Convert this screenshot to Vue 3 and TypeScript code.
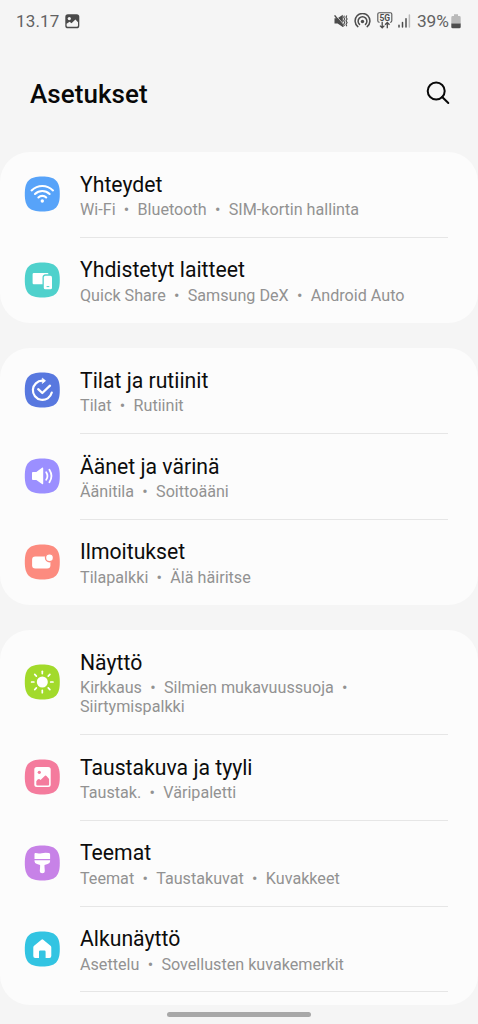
<script setup lang="ts">
interface Item {
  icon: string
  color: string
  title: string
  parts: string[]
}

const groups: Item[][] = [
  [
    { icon: 'wifi', color: '#57a3f9', title: 'Yhteydet', parts: ['Wi-Fi', 'Bluetooth', 'SIM-kortin hallinta'] },
    { icon: 'devices', color: '#4fd1cc', title: 'Yhdistetyt laitteet', parts: ['Quick Share', 'Samsung DeX', 'Android Auto'] },
  ],
  [
    { icon: 'modes', color: '#5878df', title: 'Tilat ja rutiinit', parts: ['Tilat', 'Rutiinit'] },
    { icon: 'sound', color: '#9b8fff', title: 'Äänet ja värinä', parts: ['Äänitila', 'Soittoääni'] },
    { icon: 'notify', color: '#fc8b7f', title: 'Ilmoitukset', parts: ['Tilapalkki', 'Älä häiritse'] },
  ],
  [
    { icon: 'display', color: '#a2da2b', title: 'Näyttö', parts: ['Kirkkaus', 'Silmien mukavuussuoja', 'Siirtymispalkki'] },
    { icon: 'wallpaper', color: '#f47b9d', title: 'Taustakuva ja tyyli', parts: ['Taustak.', 'Väripaletti'] },
    { icon: 'themes', color: '#c782e7', title: 'Teemat', parts: ['Teemat', 'Taustakuvat', 'Kuvakkeet'] },
    { icon: 'home', color: '#32c4e2', title: 'Alkunäyttö', parts: ['Asettelu', 'Sovellusten kuvakemerkit'] },
  ],
]

const rays = [0, 45, 90, 135, 180, 225, 270, 315]
</script>

<template>
  <div class="screen">
    <div class="status">
      <span class="clock">13.17</span>
      <svg class="s-image" width="15" height="15" viewBox="0 0 15 15">
        <rect x="0.3" y="0.3" width="14" height="14" rx="2.6" fill="#4a4a4a" />
        <circle cx="4.3" cy="4.6" r="1.6" fill="#f5f5f5" />
        <path d="M1.6 9.8 4.6 7.8 6.5 9.3 10.4 5.6 13 8.3V11.4Q13 12.7 11.7 12.7H2.9Q1.6 12.7 1.6 11.4Z" fill="#f5f5f5" />
      </svg>
      <span class="spacer"></span>
      <svg class="s-mute" width="14" height="14" viewBox="0 0 14 14">
        <path d="M0.5 4.2H3.6L8.8 0.8V13L3.6 9.6H0.5Z" fill="#4c4c4c" />
        <path d="M1.6 1.2 9.6 10.2" stroke="#f5f5f5" stroke-width="0.7" />
        <path d="M0.6 1.4 9.4 12.6" stroke="#4c4c4c" stroke-width="1.5" />
        <path d="M10.4 1.6 9.7 3.3 10.7 5 9.7 6.8 10.7 8.6 9.7 10.4 10.4 12M12.8 1.6 12 3.3 13.1 5 12 6.8 13.1 8.6 12 10.4 12.8 12.2" fill="none" stroke="#4c4c4c" stroke-width="1.1" />
      </svg>
      <svg class="s-hotspot" width="17" height="16" viewBox="0 0 17 16">
        <g fill="none" stroke="#4c4c4c" stroke-width="1.5" stroke-linecap="round">
          <path d="M3.8 13.6A7.4 7.4 0 1 1 13.2 13.6" />
          <path d="M5.5 11.4A4.4 4.4 0 1 1 11.5 11.4" />
        </g>
        <circle cx="8.5" cy="8.5" r="1.7" fill="#4c4c4c" />
      </svg>
      <svg class="s-5g" width="16" height="18" viewBox="0 0 16 18">
        <path d="M2.6 10.2H2.2Q0.8 10.2 0.8 8.8V2.1Q0.8 0.7 2.2 0.7H13.4Q14.8 0.7 14.8 2.1V8.8Q14.8 10.2 13.4 10.2H13" fill="none" stroke="#555" stroke-width="1.1" />
        <text x="7.8" y="8.6" text-anchor="middle" class="g5">5G</text>
        <path d="M5.2 9.8V15.8M3 13.6 5.2 15.9 7.4 13.6M10.3 16.3V10.5M8.1 12.7 10.3 10.4 12.5 12.7" fill="none" stroke="#4c4c4c" stroke-width="1.3" />
      </svg>
      <svg class="s-signal" width="13" height="14" viewBox="0 0 13 14">
        <path d="M1 11.2V13M4.5 8.4V13M8 4.8V13" stroke="#4c4c4c" stroke-width="1.5" stroke-linecap="round" />
        <path d="M11.4 1V13" stroke="#b9b9b9" stroke-width="1.5" stroke-linecap="round" />
      </svg>
      <span class="percent">39%</span>
      <svg class="s-battery" width="10" height="15" viewBox="0 0 10 15">
        <path d="M3 0.3H7V2H8.3Q9.7 2 9.7 3.4V9.8H0.3V3.4Q0.3 2 1.7 2H3Z" fill="#b9b9b9" />
        <path d="M0.3 9.6H9.7V12.9Q9.7 14.3 8.3 14.3H1.7Q0.3 14.3 0.3 12.9Z" fill="#4c4c4c" />
      </svg>
    </div>

    <header class="header">
      <h1>Asetukset</h1>
      <svg width="24" height="24" viewBox="0 0 24 24" fill="none" stroke="#080808" stroke-width="2">
        <circle cx="10.2" cy="10" r="8.5" />
        <path d="M16.2 16 22.3 22" stroke-linecap="round" />
      </svg>
    </header>

    <main class="groups">
      <section v-for="(group, g) in groups" :key="g" class="card">
        <div v-for="item in group" :key="item.title" class="row">
          <svg class="icon" width="36" height="36" viewBox="-0.3 0 36 36">
            <path d="M18 .5C31 .5 35.5 5 35.5 18S31 35.5 18 35.5.5 31 .5 18 5 .5 18 .5Z" :fill="item.color" />
            <g v-if="item.icon === 'wifi'" fill="none" stroke="#fff" stroke-width="2.1" stroke-linecap="round">
              <path d="M7.3 14.4Q12 10 18 10T28.7 14.4" />
              <path d="M10.7 18Q13.8 15 18 15T25.3 18" />
              <path d="M14.1 21.5Q15.6 19.9 18 19.9T21.9 21.5" />
              <circle cx="18" cy="25" r="1.7" fill="#fff" stroke="none" />
            </g>
            <g v-else-if="item.icon === 'devices'" fill="#fff">
              <path d="M9.5 11H23Q24.2 11 24.2 12.2H21.4Q18.2 12.4 18.2 15.4V22.3H9.5Q8.3 22.3 8.3 21.1V12.2Q8.3 11 9.5 11Z" />
              <rect x="19.5" y="13.8" width="8.2" height="13.5" rx="1.6" />
              <path d="M22.3 24.6H25" stroke="#4fd1cc" stroke-width="1" />
            </g>
            <g v-else-if="item.icon === 'modes'" fill="none" stroke="#fff" stroke-width="2.2" stroke-linecap="round" stroke-linejoin="round">
              <path d="M19 8.7H18A9.6 9.6 0 1 0 27.5 20.6" />
              <path d="M18.3 6.4 21.2 8.8 18.3 11.2Z" fill="#fff" stroke-width=".8" />
              <path d="M13.9 17.2 18 21 25.7 13.7" stroke-width="2.3" />
            </g>
            <g v-else-if="item.icon === 'sound'">
              <path d="M7.7 14.8Q7.7 13.9 8.6 13.9H12L17.7 9.8Q18.9 9.2 18.9 10.4V25.5Q18.9 26.7 17.7 26.1L12 22H8.6Q7.7 22 7.7 21.1Z" fill="#fff" />
              <path d="M21.9 14.2Q24.4 18 21.9 21.8M25.1 11.7Q29.2 18 25.1 24.3" fill="none" stroke="#fff" stroke-width="1.8" stroke-linecap="round" />
            </g>
            <g v-else-if="item.icon === 'notify'">
              <rect x="7.8" y="12.6" width="18.3" height="11.8" rx="3.2" fill="#fff" />
              <circle cx="25.2" cy="13.8" r="4" fill="#fff" stroke="#fc8b7f" stroke-width="1.4" />
            </g>
            <g v-else-if="item.icon === 'display'">
              <circle cx="18" cy="18" r="5.5" fill="#fff" />
              <path v-for="r in rays" :key="r" d="M18 7.3V9.6" :transform="`rotate(${r} 18 18)`" stroke="#fff" stroke-width="1.7" stroke-linecap="round" />
            </g>
            <g v-else-if="item.icon === 'wallpaper'">
              <rect x="10" y="8" width="16.4" height="20" rx="2.5" fill="#fff" />
              <circle cx="15" cy="13.3" r="1.6" fill="#f47b9d" />
              <path d="M12 22.2Q14.3 18.7 16.2 21.1L20.7 16.8Q21.5 16.2 22.2 17L24.8 20V25.4Q24.8 26.4 23.8 26.4H13Q12 26.4 12 25.4Z" fill="#f47b9d" />
            </g>
            <g v-else-if="item.icon === 'themes'" fill="#fff">
              <path d="M10.2 9Q10.2 7.9 11.3 8.1 14.4 8.9 17.4 8.2 21 7.2 24.7 8.1 25.8 8.4 25.8 9.5V14H10.2Z" />
              <path d="M10.2 15.3H25.8V16.3Q25.8 18.6 23.3 19L20.2 20V22L20.5 25.7Q20.5 28.2 18 28.2T15.5 25.7L15.8 22V20L12.7 19Q10.2 18.6 10.2 16.3Z" />
            </g>
            <path v-else d="M17.1 8.7Q18 8 18.9 8.7L26.2 14.7Q27 15.4 27 16.5V25.1Q27 27 25.1 27H21.3V20.8Q21.3 19.6 20.1 19.6H15.9Q14.7 19.6 14.7 20.8V27H10.9Q9 27 9 25.1V16.5Q9 15.4 9.8 14.7Z" fill="#fff" />
          </svg>
          <div class="text">
            <div class="title">{{ item.title }}</div>
            <div class="sub">
              <template v-for="(part, i) in item.parts" :key="part"><span class="part">{{ part }}</span><span v-if="i < item.parts.length - 1" class="dot">•</span><wbr /></template>
            </div>
          </div>
        </div>
      </section>
    </main>
    <div class="handle"></div>
  </div>
</template>

<style>
body {
  background: #f5f5f5;
}
</style>

<style scoped>
.screen {
  box-sizing: border-box;
  width: 478px;
  height: 1024px;
  overflow: hidden;
  background: #f5f5f5;
  font-family: Roboto, "Liberation Sans", sans-serif;
  display: flex;
  flex-direction: column;
}
.status {
  height: 42px;
  display: flex;
  align-items: center;
  padding: 0 17px 0 16px;
  color: #626262;
  font-size: 17px;
  flex: none;
}
.clock {
  letter-spacing: 0.15px;
  margin-right: 6px;
}
.spacer {
  flex: 1;
}
.s-mute {
  margin-right: 6px;
}
.s-hotspot {
  margin-right: 6px;
}
.s-5g {
  margin-right: 5px;
}
.s-signal {
  margin-right: 6px;
}
.g5 {
  font-size: 8.5px;
  font-weight: 700;
  fill: #4c4c4c;
}
.percent {
  font-size: 17.3px;
  margin-right: 2px;
}
.header {
  height: 110px;
  flex: none;
  box-sizing: border-box;
  padding: 36px 28px 0 30px;
  display: flex;
  justify-content: space-between;
  align-items: flex-start;
}
.header svg {
  margin-top: 3px;
}
h1 {
  margin: 0;
  font-size: 26px;
  line-height: 32px;
  font-weight: 500;
  letter-spacing: 0.06px;
  color: #080808;
}
.groups {
  display: flex;
  flex-direction: column;
  gap: 25px;
  flex: none;
}
.card {
  background: #fcfcfc;
  border-radius: 30px;
}
.card:last-child {
  padding-bottom: 12.5px;
}
.row {
  display: flex;
  align-items: flex-start;
  gap: 20px;
  padding: 0 30px 0 24px;
}
.icon {
  flex: none;
  align-self: center;
  margin-bottom: 1.6px;
}
.text {
  box-sizing: border-box;
  flex: 1;
  min-width: 0;
  padding: 19.5px 0 17.7px;
  border-bottom: 1px solid #e6e6e6;
}
.card:not(:last-child) .row:last-child .text {
  border-color: transparent;
}
.title {
  font-size: 21.2px;
  line-height: 26px;
  color: #0c0c0c;
  white-space: nowrap;
}
.sub {
  margin-top: 2.5px;
  width: 340px;
  font-size: 16.15px;
  line-height: 19px;
  color: #929292;
}
.part {
  white-space: nowrap;
}
.dot {
  display: inline-block;
  width: 22px;
  text-align: center;
}
.handle {
  width: 144px;
  height: 5px;
  border-radius: 3px;
  background: #a8a8a8;
  margin: 7px auto 0;
  flex: none;
}
</style>
